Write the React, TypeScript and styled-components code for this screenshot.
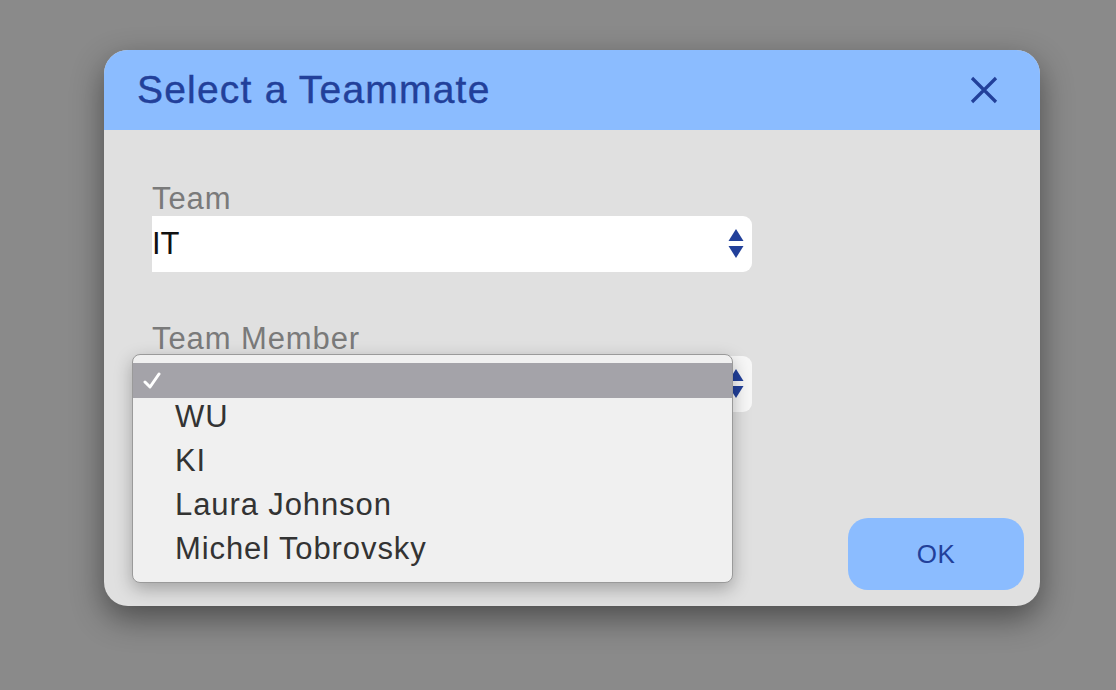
import React from 'react';
import styled, { createGlobalStyle } from 'styled-components';

const GlobalStyle = createGlobalStyle`
  html, body {
    margin: 0;
    padding: 0;
    background: #8a8a8a;
    font-family: "Liberation Sans", Arial, sans-serif;
  }
`;

const Page = styled.div`
  width: 1116px;
  height: 690px;
  padding: 50px 0 0 104px;
  box-sizing: border-box;
`;

const Dialog = styled.div`
  width: 936px;
  height: 556px;
  border-radius: 24px;
  background: #e0e0e0;
  box-shadow: 0 12px 32px rgba(0, 0, 0, 0.45);
  display: flex;
  flex-direction: column;
`;

const Header = styled.div`
  height: 80px;
  background: #8bbcff;
  border-radius: 24px 24px 0 0;
  display: flex;
  align-items: center;
  justify-content: space-between;
  padding: 0 42px 0 33px;
`;

const Title = styled.h1`
  margin: 0;
  font-size: 39px;
  font-weight: 400;
  color: #22409a;
  letter-spacing: 1.2px;
  -webkit-text-stroke: 0.4px #22409a;
`;

const CloseButton = styled.button`
  border: none;
  background: none;
  padding: 0;
  width: 28px;
  height: 28px;
  display: flex;
  cursor: pointer;
`;

const Body = styled.div`
  flex: 1;
  display: flex;
  flex-direction: column;
  padding: 52px 16px 16px 48px;
`;

const Field = styled.div`
  position: relative;
  display: flex;
  flex-direction: column;
  margin-bottom: 50px;
`;

const Label = styled.label`
  font-size: 31px;
  line-height: 34px;
  color: #7a7a7a;
  letter-spacing: 0.9px;
`;

const SelectBox = styled.div<{ $muted?: boolean }>`
  width: 600px;
  height: 56px;
  box-sizing: border-box;
  background: ${(p) => (p.$muted ? '#f7f7f7' : '#ffffff')};
  border-radius: 0 9px 9px 0;
  display: flex;
  align-items: center;
  justify-content: space-between;
  padding-right: 8px;
  font-size: 31px;
  color: #111;
`;

const Arrows = styled.svg`
  width: 16px;
  height: 30px;
  flex-shrink: 0;
`;

const Menu = styled.ul`
  position: absolute;
  left: -20px;
  top: 32px;
  width: 601px;
  height: 229px;
  box-sizing: border-box;
  margin: 0;
  padding: 8px 0 0;
  list-style: none;
  background: #f0f0f0;
  border: 1px solid #9a9a9a;
  border-radius: 8px;
  box-shadow: 0 6px 18px rgba(0, 0, 0, 0.28);
  z-index: 2;
`;

const MenuItem = styled.li<{ $selected?: boolean }>`
  height: ${(p) => (p.$selected ? '35px' : '44px')};
  box-sizing: border-box;
  display: flex;
  align-items: center;
  padding-left: ${(p) => (p.$selected ? '10px' : '42px')};
  padding-bottom: ${(p) => (p.$selected ? '0' : '7px')};
  background: ${(p) => (p.$selected ? '#a4a3a9' : 'transparent')};
  font-size: 31px;
  line-height: 1;
  color: #333;
  letter-spacing: 0.9px;
`;

const Footer = styled.div`
  margin-top: auto;
  display: flex;
  justify-content: flex-end;
`;

const OkButton = styled.button`
  width: 176px;
  height: 72px;
  border: none;
  border-radius: 20px;
  background: #8bbcff;
  color: #22409a;
  font-family: "Liberation Sans", Arial, sans-serif;
  font-size: 26px;
  letter-spacing: 0.5px;
  cursor: pointer;
`;

const UpDown = () => (
  <Arrows viewBox="0 0 16 30">
    <polygon points="8,0 15.5,12 0.5,12" fill="#22409a" />
    <polygon points="0.5,17 15.5,17 8,29" fill="#22409a" />
  </Arrows>
);

const members = ['WU', 'KI', 'Laura Johnson', 'Michel Tobrovsky'];

export default function App() {
  return (
    <>
      <GlobalStyle />
      <Page>
        <Dialog>
          <Header>
            <Title>Select a Teammate</Title>
            <CloseButton aria-label="Close">
              <svg width="28" height="28" viewBox="0 0 28 28">
                <path
                  d="M2 2 L26 26 M26 2 L2 26"
                  stroke="#22409a"
                  strokeWidth="3.2"
                  fill="none"
                />
              </svg>
            </CloseButton>
          </Header>
          <Body>
            <Field>
              <Label>Team</Label>
              <SelectBox>
                <span>IT</span>
                <UpDown />
              </SelectBox>
            </Field>
            <Field>
              <Label>Team Member</Label>
              <SelectBox $muted>
                <span />
                <UpDown />
              </SelectBox>
              <Menu>
                <MenuItem $selected>
                  <svg width="18" height="18" viewBox="0 0 18 18">
                    <path
                      d="M2 10 L7 15 L16 2"
                      stroke="#ffffff"
                      strokeWidth="3"
                      fill="none"
                      strokeLinecap="round"
                      strokeLinejoin="round"
                    />
                  </svg>
                </MenuItem>
                {members.map((m) => (
                  <MenuItem key={m}>{m}</MenuItem>
                ))}
              </Menu>
            </Field>
            <Footer>
              <OkButton>OK</OkButton>
            </Footer>
          </Body>
        </Dialog>
      </Page>
    </>
  );
}
